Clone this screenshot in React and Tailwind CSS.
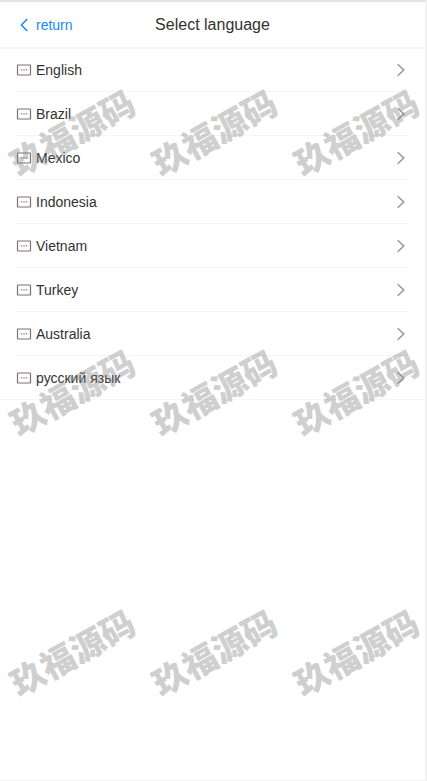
const languages = [
  "English",
  "Brazil",
  "Mexico",
  "Indonesia",
  "Vietnam",
  "Turkey",
  "Australia",
  "русский язык",
];

function Arrow({ className, flip }) {
  return (
    <svg className={className} width="8" height="14" viewBox="0 0 8 14" fill="none" stroke="currentColor" strokeWidth="1.5" aria-hidden="true">
      <path d={flip ? "M7.3 1 1.4 7l5.9 6" : "M.7 1.3l6.1 5.7-6.1 5.7"} />
    </svg>
  );
}

function FlagIcon() {
  return (
    <svg width="16" height="12" viewBox="0 0 16 12" fill="none" aria-hidden="true">
      <rect x="1.5" y="1" width="13" height="10" rx=".5" stroke="#7d6f73" strokeWidth="1.2" />
      <path d="M4.8 5.8h1.5M7.3 5.8h1.5M9.8 5.8h1.5" stroke="#8b8188" strokeWidth="1.2" />
    </svg>
  );
}

function Watermark() {
  return (
    <div
      aria-hidden="true"
      className="pointer-events-none absolute inset-0 grid grid-cols-[repeat(3,142px)] auto-rows-[260px] overflow-hidden pl-px opacity-40"
    >
      {Array.from({ length: 9 }, (_, i) => (
        <div key={i} className="flex items-center justify-center">
          <span className="-rotate-29 whitespace-nowrap font-['Noto_Sans_CJK_SC',sans-serif] text-[34px] leading-none font-black text-[#888888]">
            玖福源码
          </span>
        </div>
      ))}
    </div>
  );
}

export default function App() {
  return (
    <div className="relative flex min-h-screen flex-col border-t-2 border-r-2 border-b border-[#f2f2f2] border-t-[#e4e4e4] bg-white font-['Liberation_Sans',Arial,sans-serif] text-[#323233]">
      <header className="grid h-[47px] grid-cols-3 items-center border-b-2 border-[#f7f7f7] px-4">
        <button type="button" className="flex items-center gap-2 pl-1 text-sm text-[#1989fa]">
          <Arrow flip />
          return
        </button>
        <h1 className="whitespace-nowrap text-center text-base">Select language</h1>
      </header>

      <ul className="-mt-px">
        {languages.map((name) => (
          <li key={name} className="group border-[#f5f5f5] px-4 last:border-b">
            <button
              type="button"
              className="flex h-11 w-full items-center gap-1 border-b border-[#f5f5f5] text-left text-sm group-last:h-[43px] group-last:border-b-0"
            >
              <FlagIcon />
              <span className="flex-1">{name}</span>
              <Arrow className="mr-1 text-[#969799]" />
            </button>
          </li>
        ))}
      </ul>

      <Watermark />
    </div>
  );
}
